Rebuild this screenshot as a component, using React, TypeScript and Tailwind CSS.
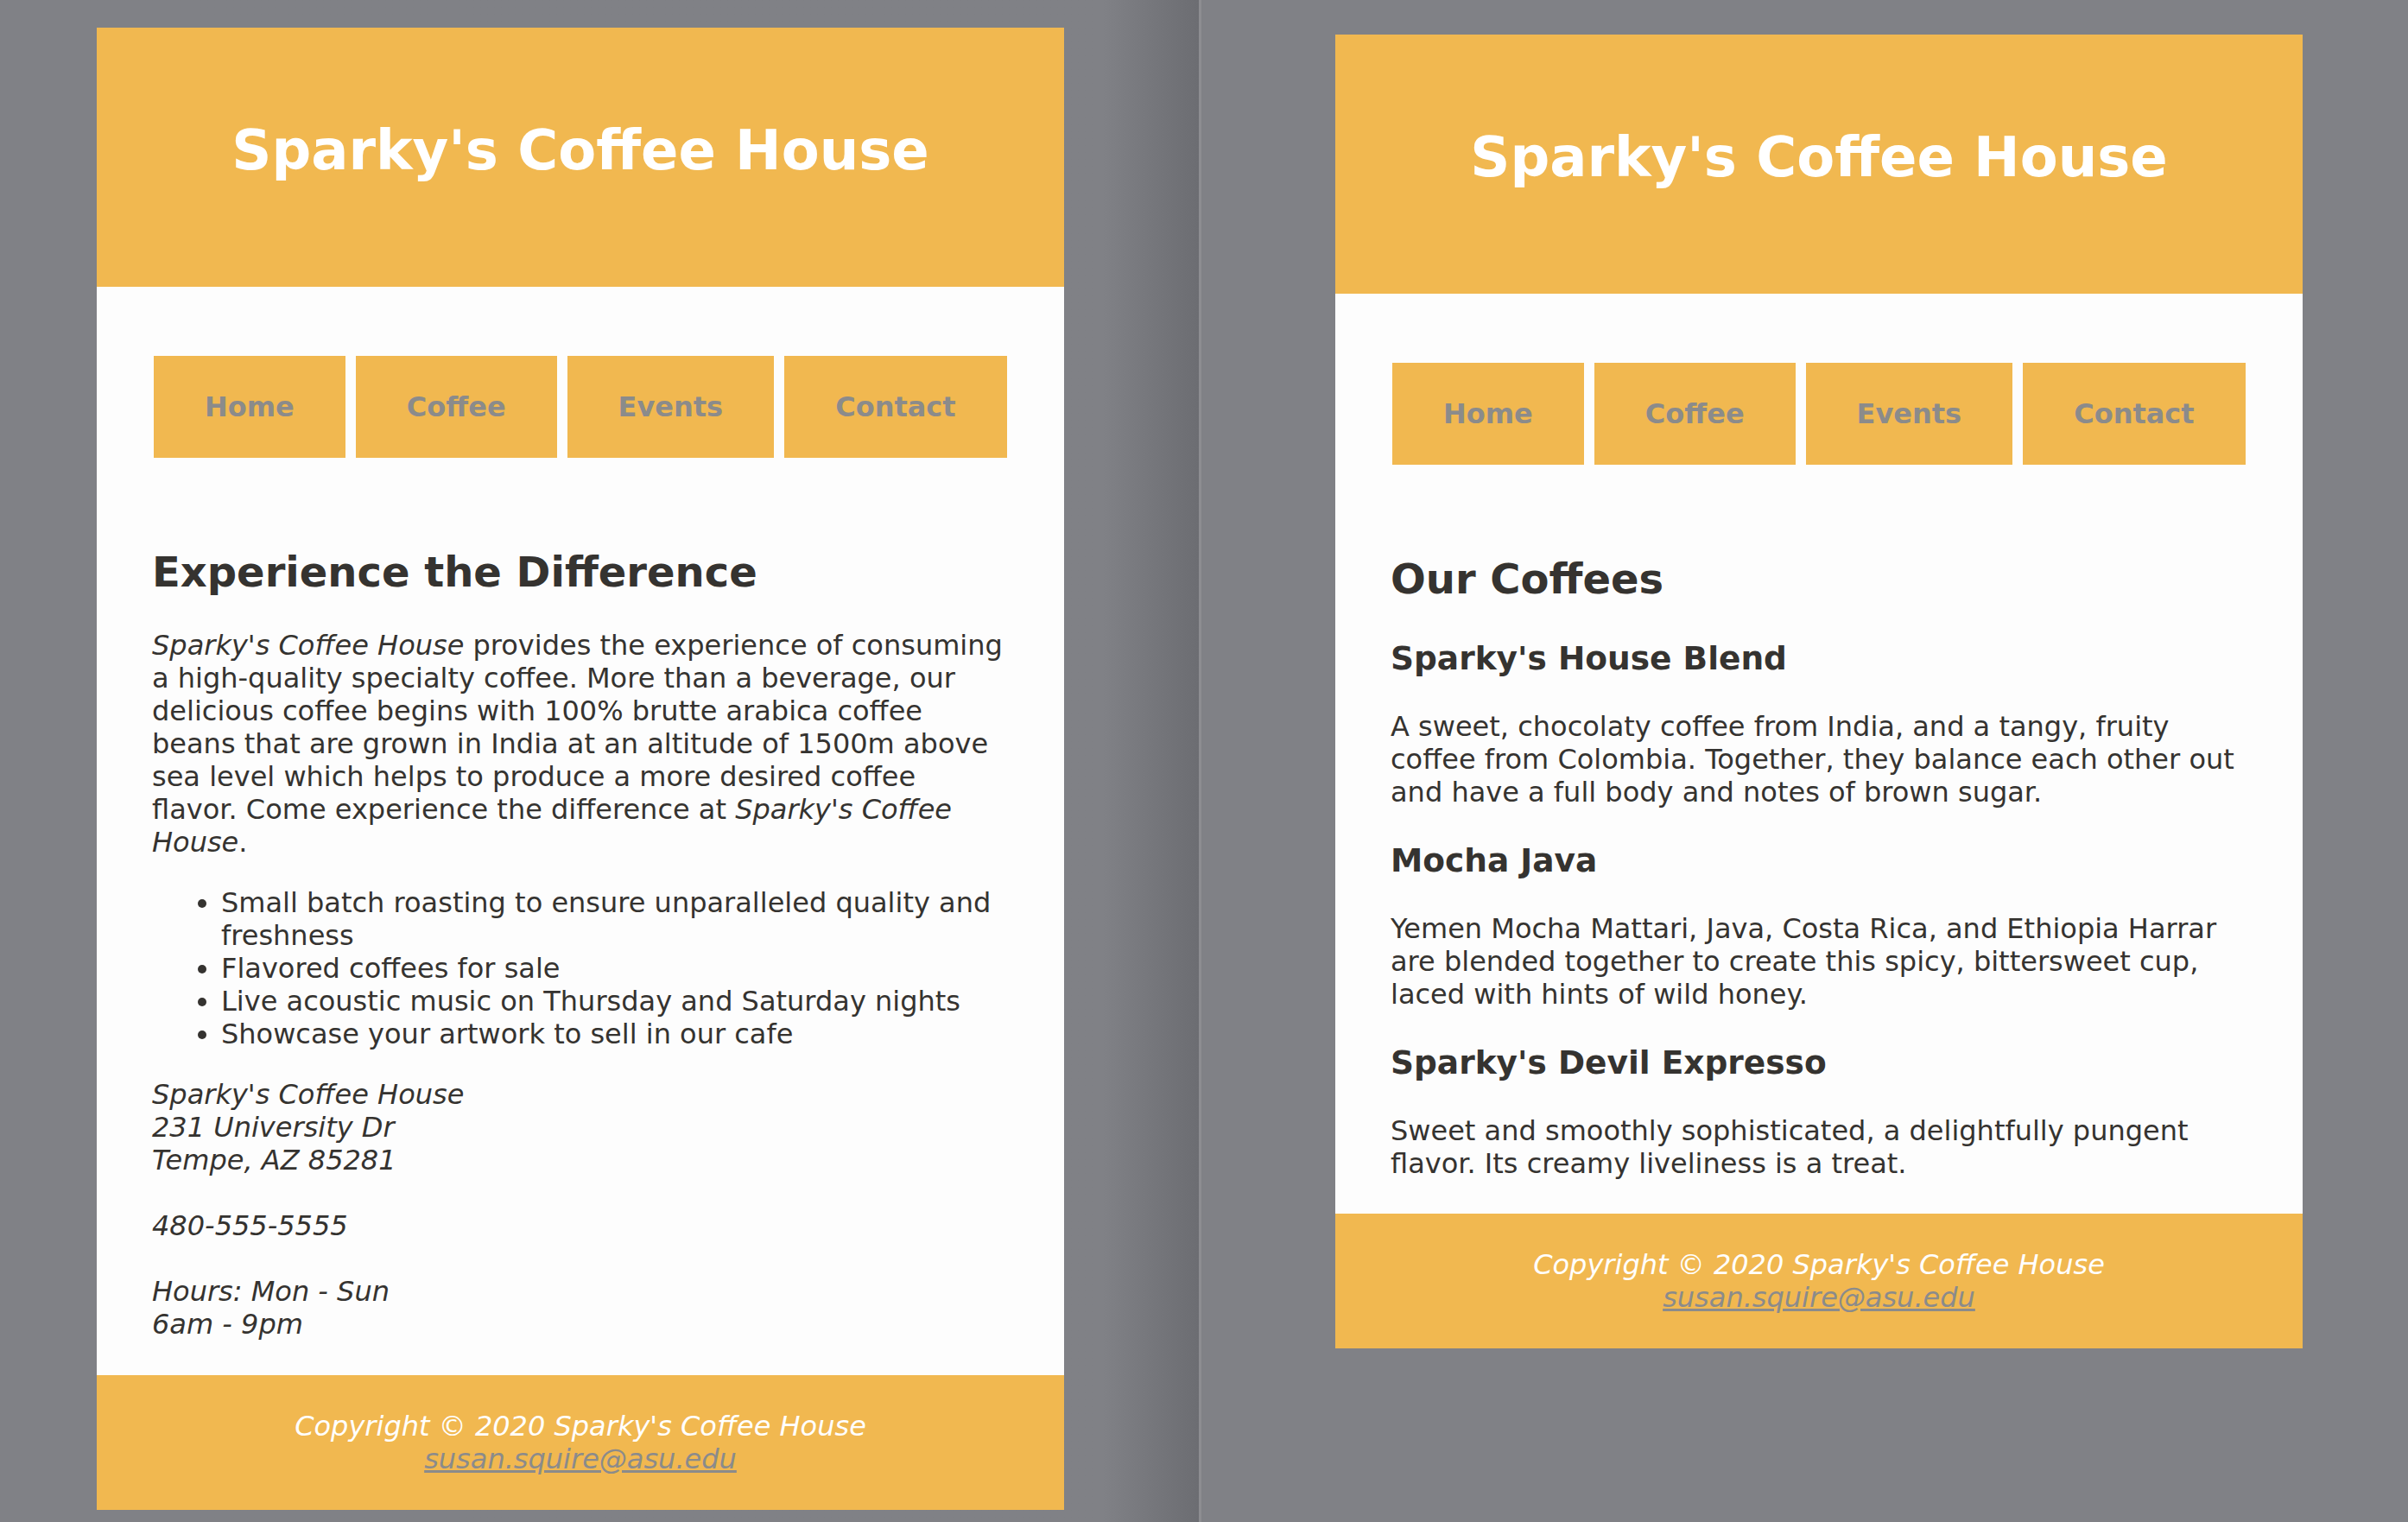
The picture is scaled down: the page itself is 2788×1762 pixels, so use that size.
const links = ["Home", "Coffee", "Events", "Contact"];

function Header() {
  return (
    <header className="h-[300px] bg-[#f1b850] pt-[105px] text-center">
      <h1 className="text-[64px] leading-[75px] font-bold text-white">
        Sparky's Coffee House
      </h1>
    </header>
  );
}

function Nav() {
  return (
    <nav className="ml-[2px] flex gap-[12px]">
      {links.map((link) => (
        <a
          key={link}
          href="#"
          className="bg-[#f1b850] px-[59px] py-[40px] text-[32px] leading-[38px] font-bold text-[#8b8b8b]"
        >
          {link}
        </a>
      ))}
    </nav>
  );
}

function Footer() {
  return (
    <footer className="h-[156px] bg-[#f1b850] py-[40px] text-center text-[32px] leading-[38px] italic text-white">
      Copyright © 2020 Sparky's Coffee House
      <br />
      <a href="#" className="text-[#8b8b8b] underline">
        susan.squire@asu.edu
      </a>
    </footer>
  );
}

function HomePage() {
  return (
    <div className="w-[1120px] bg-[#fdfdfd] text-[#353330]">
      <Header />
      <main className="px-[64px] pt-[80px] pb-[40px] text-[32px] leading-[38px]">
        <Nav />
        <h2 className="mt-[104px] text-[48px] leading-[56px] font-bold">
          Experience the Difference
        </h2>
        <p className="mt-[38px] whitespace-nowrap">
          <i>Sparky's Coffee House</i> provides the experience of consuming
          <br />
          a high-quality specialty coffee. More than a beverage, our
          <br />
          delicious coffee begins with 100% brutte arabica coffee
          <br />
          beans that are grown in India at an altitude of 1500m above
          <br />
          sea level which helps to produce a more desired coffee
          <br />
          flavor. Come experience the difference at <i>Sparky's Coffee</i>
          <br />
          <i>House</i>.
        </p>
        <ul className="mt-[32px] list-disc pl-[80px] whitespace-nowrap">
          <li>
            Small batch roasting to ensure unparalleled quality and
            <br />
            freshness
          </li>
          <li>Flavored coffees for sale</li>
          <li>Live acoustic music on Thursday and Saturday nights</li>
          <li>Showcase your artwork to sell in our cafe</li>
        </ul>
        <p className="mt-[32px] italic">
          Sparky's Coffee House
          <br />
          231 University Dr
          <br />
          Tempe, AZ 85281
          <br />
          <br />
          480-555-5555
          <br />
          <br />
          Hours: Mon - Sun
          <br />
          6am - 9pm
        </p>
      </main>
      <Footer />
    </div>
  );
}

function CoffeePage() {
  return (
    <div className="w-[1120px] bg-[#fdfdfd] text-[#353330]">
      <Header />
      <main className="px-[64px] pt-[80px] pb-[39px] text-[32px] leading-[38px]">
        <Nav />
        <h2 className="mt-[104px] text-[48px] leading-[56px] font-bold">Our Coffees</h2>
        <h3 className="mt-[42px] text-[37.5px] leading-[44px] font-bold">
          Sparky's House Blend
        </h3>
        <p className="mt-[38px] whitespace-nowrap">
          A sweet, chocolaty coffee from India, and a tangy, fruity
          <br />
          coffee from Colombia. Together, they balance each other out
          <br />
          and have a full body and notes of brown sugar.
        </p>
        <h3 className="mt-[38px] text-[37.5px] leading-[44px] font-bold">Mocha Java</h3>
        <p className="mt-[38px] whitespace-nowrap">
          Yemen Mocha Mattari, Java, Costa Rica, and Ethiopia Harrar
          <br />
          are blended together to create this spicy, bittersweet cup,
          <br />
          laced with hints of wild honey.
        </p>
        <h3 className="mt-[38px] text-[37.5px] leading-[44px] font-bold">
          Sparky's Devil Expresso
        </h3>
        <p className="mt-[38px] whitespace-nowrap">
          Sweet and smoothly sophisticated, a delightfully pungent
          <br />
          flavor. Its creamy liveliness is a treat.
        </p>
      </main>
      <Footer />
    </div>
  );
}

export default function App() {
  return (
    <div className="flex h-[1762px] w-[2788px] overflow-hidden bg-[#808186] font-['DejaVu_Sans',Verdana,sans-serif]">
      <div className="w-[1388px] shrink-0 bg-linear-to-r from-[#808186] from-[92%] to-[#6c6d72] pt-[32px] pl-[112px]">
        <HomePage />
      </div>
      <div className="w-[3px] shrink-0 bg-[#8d8d91]" />
      <div className="flex-1 pt-[40px] pl-[155px]">
        <CoffeePage />
      </div>
    </div>
  );
}
